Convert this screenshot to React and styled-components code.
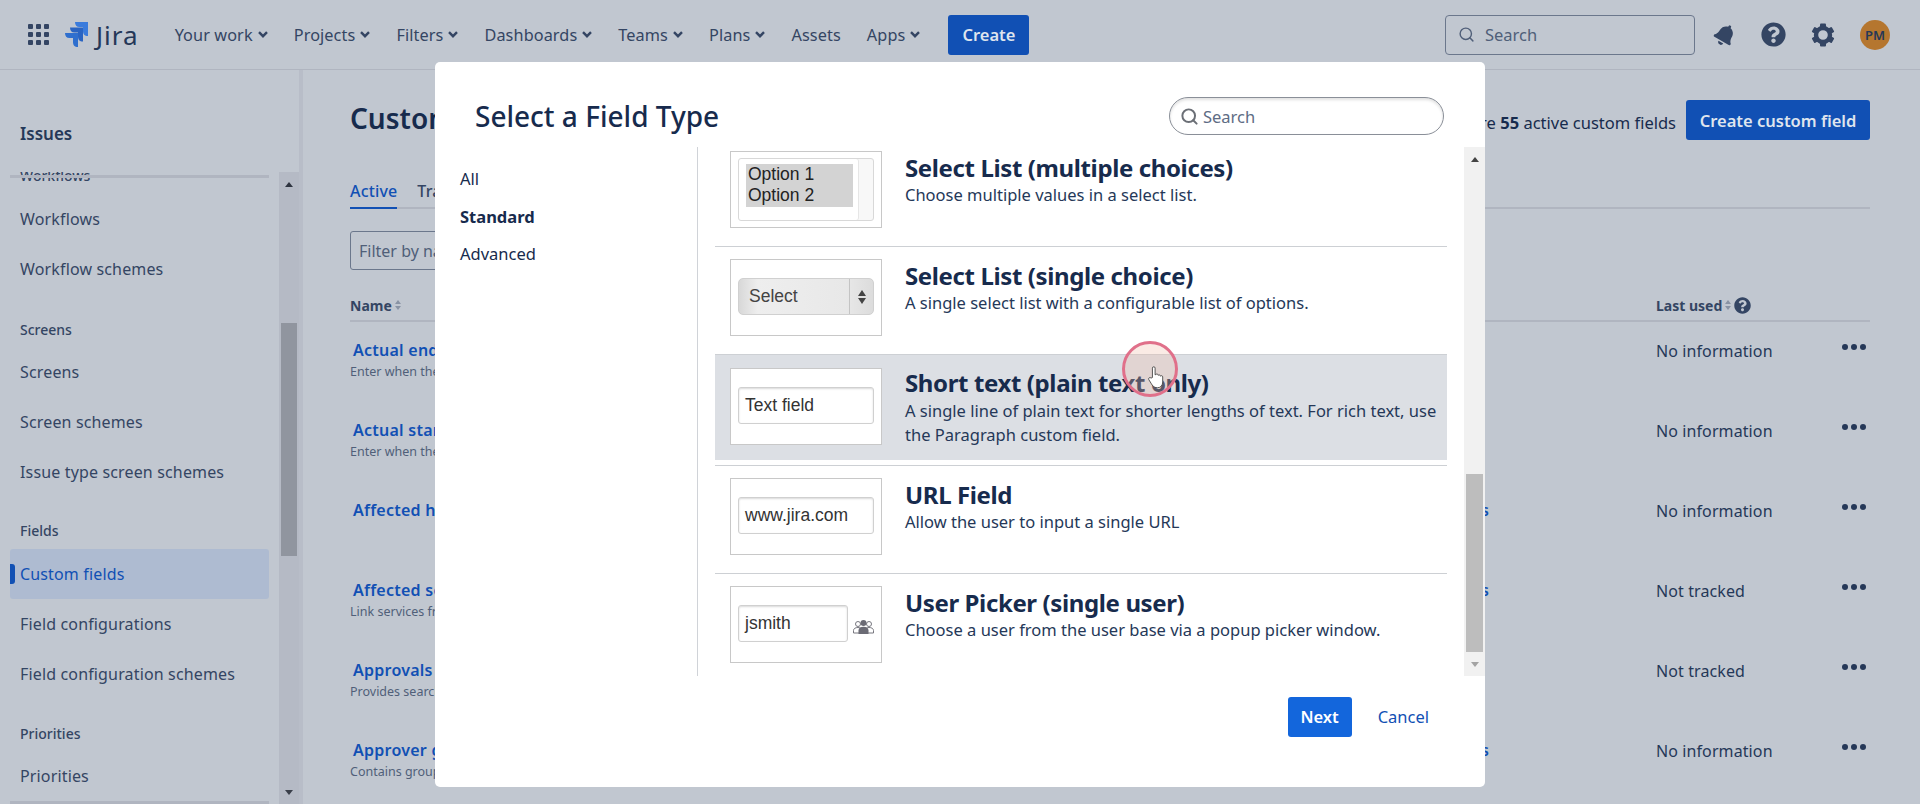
import React from 'react';
import styled, { createGlobalStyle } from 'styled-components';
import { FiSearch } from 'react-icons/fi';
import { FaBell, FaQuestionCircle } from 'react-icons/fa';

const GlobalStyle = createGlobalStyle`
  html, body {
    margin: 0;
    padding: 0;
    height: 804px;
    overflow: hidden;
    background: #c1c7d0;
    font-family: "Noto Sans", "Open Sans", sans-serif;
    color: #172b4d;
  }
  * { box-sizing: border-box; }
`;

const Page = styled.div`
  position: relative;
  width: 1920px;
  height: 804px;
  display: flex;
  flex-direction: column;
  overflow: hidden;
  background: #c1c7d0;
`;

const TopBar = styled.header`
  height: 70px;
  flex-shrink: 0;
  display: flex;
  align-items: center;
  padding: 0 30px 0 28px;
  border-bottom: 1px solid #b0b5c0;
`;

const AppGrid = styled.div`
  display: grid;
  grid-template-columns: repeat(3, 5px);
  grid-auto-rows: 5px;
  gap: 3px;
  margin-right: 16px;
`;

const AppDot = styled.span`
  background: #344563;
  border-radius: 1px;
`;

const LogoText = styled.span`
  font-size: 26px;
  font-weight: 400;
  color: #253858;
  margin-left: 8px;
  margin-right: 36px;
  letter-spacing: 1px;
`;

const NavItem = styled.a`
  display: flex;
  align-items: center;
  gap: 5px;
  margin-right: ${(p) => p.$gap || 26}px;
  font-size: 16.25px;
  letter-spacing: 0.1px;
  color: #344563;
  white-space: nowrap;
`;

const CreateButton = styled.button`
  width: 81px;
  height: 40px;
  border: none;
  border-radius: 3px;
  background: #1150b4;
  color: #dfe5ee;
  font: 600 16.5px "Noto Sans", sans-serif;
`;

const TopSearch = styled.div`
  width: 250px;
  height: 40px;
  margin-left: auto;
  display: flex;
  align-items: center;
  gap: 10px;
  padding: 0 12px;
  border: 1px solid #6b778c;
  border-radius: 4px;
  color: #505f79;
  font-size: 16.5px;
`;

const TopIcons = styled.div`
  display: flex;
  align-items: center;
  color: #344563;
  margin-left: 19px;
  gap: 25px;
`;

const Avatar = styled.div`
  width: 30px;
  height: 30px;
  border-radius: 50%;
  background: #b5762f;
  color: #253858;
  font-size: 13px;
  font-weight: 600;
  display: flex;
  align-items: center;
  justify-content: center;
`;

const Body = styled.div`
  flex: 1;
  min-height: 0;
  display: flex;
`;

const Sidebar = styled.aside`
  width: 303px;
  flex-shrink: 0;
  display: flex;
  flex-direction: column;
  border-right: 4px solid #b8bdc8;
`;

const SidebarTitle = styled.div`
  height: 102px;
  padding: 52px 0 0 20px;
  font-size: 17px;
  font-weight: 600;
  color: #253858;
`;

const SidebarBody = styled.div`
  flex: 1;
  min-height: 0;
  display: flex;
  position: relative;
  gap: 10px;
  padding-left: 10px;
`;

const RuleLine = styled.div`
  position: absolute;
  left: 10px;
  width: 259px;
  height: 3px;
  background: #b0b5c0;
  ${(p) => (p.$bottom ? 'bottom: 0;' : 'top: 3px;')}
`;

const SideList = styled.nav`
  width: 259px;
  overflow: hidden;
  display: flex;
  flex-direction: column;
`;

const SideHeading = styled.div`
  height: 20px;
  flex-shrink: 0;
  margin: ${(p) => p.$margin};
  padding-left: 10px;
  font-size: 14px;
  line-height: 20px;
  font-weight: 500;
  color: #344563;
`;

const SideItem = styled.a`
  position: relative;
  height: 50px;
  flex-shrink: 0;
  display: flex;
  align-items: center;
  padding-left: 10px;
  font-size: 16px;
  letter-spacing: 0.15px;
  border-radius: 3px;
  color: ${(p) => (p.$active ? '#1150b4' : '#344563')};
  background: ${(p) => (p.$active ? '#aebbd1' : 'transparent')};

  ${(p) =>
    p.$active &&
    `&::before {
      content: '';
      position: absolute;
      left: 0;
      top: 15px;
      width: 5px;
      height: 20px;
      border-radius: 0 3px 3px 0;
      background: #1150b4;
    }`}
`;

const Track = styled.div`
  width: 20px;
  display: flex;
  flex-direction: column;
  background: ${(p) => p.$bg};
`;

const Arrow = styled.div`
  height: 24px;
  flex-shrink: 0;
  display: flex;
  align-items: center;
  justify-content: center;

  &::after {
    content: '';
    border-left: 4.5px solid transparent;
    border-right: 4.5px solid transparent;
    ${(p) => (p.$down ? 'border-top' : 'border-bottom')}: 5px solid ${(p) => p.$color};
  }
`;

const Thumb = styled.div`
  height: ${(p) => p.$height}px;
  margin: ${(p) => p.$top}px 2px auto;
  background: ${(p) => p.$color};
`;

const Main = styled.main`
  flex: 1;
  min-width: 0;
  padding: 0 50px 0 47px;
`;

const MainHead = styled.div`
  height: 100px;
  padding-top: 30px;
  display: flex;
  align-items: flex-start;
`;

const PageTitle = styled.h1`
  margin: -2px 0 0;
  font-size: 28px;
  line-height: 40px;
  font-weight: 600;
  color: #172b4d;
`;

const HeadRight = styled.div`
  margin-left: auto;
  display: flex;
  align-items: center;
  gap: 10px;
  font-size: 16.5px;
  color: #172b4d;
`;

const CountText = styled.span`
  margin-top: 4px;
`;

const PrimaryButton = styled.button`
  height: 40px;
  width: 184px;
  border: none;
  border-radius: 3px;
  background: #1150b4;
  color: #dfe5ee;
  font: 600 16.5px "Noto Sans", sans-serif;
`;

const Tabs = styled.div`
  display: flex;
  gap: 20px;
  height: 39px;
  border-bottom: 2px solid #b0b5c0;
  font-size: 16px;
  font-weight: 500;
  letter-spacing: 0.15px;
  color: #344563;
`;

const Tab = styled.a`
  height: 39px;
  padding-top: 10px;
  color: ${(p) => (p.$active ? '#1150b4' : '#344563')};
  border-bottom: ${(p) => (p.$active ? '2px solid #1150b4' : 'none')};
`;

const FilterInput = styled.div`
  width: 200px;
  height: 39px;
  margin-top: 22px;
  padding: 0 8px;
  display: flex;
  align-items: center;
  border: 1px solid #6b778c;
  border-radius: 3px;
  font-size: 16px;
  color: #505f79;
`;

const TableHead = styled.div`
  height: 52px;
  padding-top: 25px;
  display: grid;
  grid-template-columns: 1306px 1fr;
  border-bottom: 2px solid #b0b5c0;
  font-size: 14px;
  font-weight: 700;
  color: #344563;
`;

const HeadCell = styled.div`
  display: flex;
  align-items: center;
  gap: 3px;
  height: 20px;
`;

const SortMark = styled.span`
  display: flex;
  flex-direction: column;
  gap: 2px;

  &::before, &::after {
    content: '';
    border-left: 3px solid transparent;
    border-right: 3px solid transparent;
  }
  &::before { border-bottom: 4px solid #8993a4; }
  &::after { border-top: 4px solid #8993a4; }
`;

const TableRow = styled.div`
  height: 80px;
  padding-top: 17px;
  display: grid;
  grid-template-columns: 1139px 167px 1fr 24px;
`;

const NameCell = styled.div`
  display: flex;
  flex-direction: column;
  gap: 2px;
`;

const FieldLink = styled.a`
  padding-left: 3px;
  font-size: 16px;
  letter-spacing: 0.25px;
  line-height: 22px;
  font-weight: 600;
  color: #1150b4;
`;

const FieldDesc = styled.div`
  font-size: 12.5px;
  line-height: 18px;
  color: #505f79;
`;

const ScreensCell = styled.div`
  justify-self: end;
  margin-right: 167px;
  font-size: 16px;
  line-height: 22px;
  font-weight: 600;
  color: #1150b4;
  white-space: nowrap;
`;

const UsedCell = styled.div`
  font-size: 16px;
  letter-spacing: 0.1px;
  line-height: 24px;
  color: #253858;
`;

const Dots = styled.div`
  display: flex;
  gap: 3px;
  height: 6px;
  margin: 5px 0 0 -4px;

  span {
    width: 6px;
    height: 6px;
    border-radius: 50%;
    background: #253858;
  }
`;

const Modal = styled.section`
  position: absolute;
  left: 435px;
  top: 62px;
  width: 1050px;
  height: 725px;
  background: #fff;
  border-radius: 5px;
  display: flex;
  flex-direction: column;
`;

const ModalHead = styled.div`
  height: 85px;
  flex-shrink: 0;
  padding: 35px 41px 0 40px;
  display: flex;
  justify-content: space-between;
  align-items: flex-start;
`;

const ModalTitle = styled.h2`
  margin: 0;
  font-size: 28px;
  line-height: 38px;
  font-weight: 500;
  color: #172b4d;
`;

const ModalSearch = styled.div`
  width: 275px;
  height: 38px;
  display: flex;
  align-items: center;
  gap: 4px;
  padding: 0 10px;
  border: 1px solid #8a8f98;
  border-radius: 19px;
  box-shadow: inset 0 2px 3px rgba(0, 0, 0, 0.12);
  font-size: 16.5px;
  color: #5e6c84;
`;

const ModalBody = styled.div`
  height: 529px;
  flex-shrink: 0;
  display: flex;
`;

const TypeNav = styled.nav`
  width: 263px;
  flex-shrink: 0;
  padding: 17px 0 0 25px;
  border-right: 1px solid #d0d3d8;
  display: flex;
  flex-direction: column;
  gap: 7.5px;
`;

const TypeLink = styled.a`
  font-size: 16.5px;
  line-height: 30px;
  font-weight: ${(p) => (p.$active ? 700 : 400)};
  color: #172b4d;
`;

const TypeList = styled.div`
  width: 732px;
  margin-left: 17px;
  flex-shrink: 0;
  padding-top: 4px;
`;

const TypeRow = styled.div`
  display: flex;
  gap: 23px;
  height: ${(p) => p.$height || 107}px;
  padding: ${(p) => p.$top}px 15px 0;
  margin-bottom: ${(p) => p.$after || 0}px;
  border-top: ${(p) => (p.$first ? 'none' : '1px solid #cdd0d4')};
  background: ${(p) => (p.$hover ? '#dcdfe4' : 'transparent')};
`;

const Preview = styled.div`
  width: 152px;
  height: 77px;
  flex-shrink: 0;
  padding: 6px 7px;
  display: flex;
  align-items: ${(p) => (p.$tall ? 'flex-start' : 'center')};
  gap: 5px;
  background: #fff;
  border: 1px solid #c8c8c8;
  font-family: "Liberation Sans", Arial, sans-serif;
  font-size: 17.5px;
  color: #333;
`;

const SampleInput = styled.div`
  flex: 1;
  height: 37px;
  margin-top: -2px;
  padding-left: 6px;
  display: flex;
  align-items: center;
  background: #fff;
  border: 1px solid #d0d0d0;
  border-radius: 3px;
  box-shadow: inset 0 1px 2px rgba(0, 0, 0, 0.15);
`;

const SampleMulti = styled.div`
  flex: 1;
  height: 63px;
  padding: 5px 20px 0 7px;
  border: 1px solid #d8d8d8;
  border-radius: 3px;
  box-shadow: inset -14px 0 0 #f8f8f8, inset -15px 0 0 #e6e6e6;
`;

const OptionBlock = styled.div`
  background: #d3d3d3;
  padding: 0 0 1px 2px;
  line-height: 21px;
  color: #222;
`;

const SampleSelect = styled.div`
  flex: 1;
  height: 37px;
  margin-top: -2px;
  display: flex;
  align-items: center;
  justify-content: space-between;
  padding-left: 10px;
  border: 1px solid #d0d0d0;
  border-radius: 5px;
  background: linear-gradient(90deg, #d8d8d8, #eeeeee 14%, #e8e8e8 80%, #dcdcdc);
  color: #444;
`;

const SelectArrows = styled.div`
  width: 24px;
  height: 100%;
  display: flex;
  flex-direction: column;
  align-items: center;
  justify-content: center;
  gap: 2px;
  border-left: 1px solid #c4c4c4;

  &::before, &::after {
    content: '';
    border-left: 4px solid transparent;
    border-right: 4px solid transparent;
  }
  &::before { border-bottom: 6px solid #444; }
  &::after { border-top: 6px solid #444; }
`;

const PickerIcon = styled.span`
  display: flex;
  margin-top: 5px;
`;

const TypeText = styled.div`
  flex: 1;
  min-width: 0;
  margin-top: ${(p) => p.$offset ?? 2.5}px;
`;

const TypeTitle = styled.div`
  font-size: 24px;
  line-height: 28px;
  font-weight: 700;
  color: #172b4d;
  letter-spacing: -0.38px;
`;

const TypeDesc = styled.div`
  margin-top: 1.5px;
  margin-right: -6px;
  font-size: 16.5px;
  line-height: 24.5px;
  color: #253858;
`;

const ModalScroll = styled.div`
  width: 21px;
  margin-left: auto;
  display: flex;
  flex-direction: column;
  background: #f1f1f1;
`;

const ModalFoot = styled.div`
  flex: 1;
  display: flex;
  justify-content: flex-end;
  align-items: center;
  gap: 26px;
  padding: 0 56px 30px 0;
`;

const NextButton = styled.button`
  width: 64px;
  height: 40px;
  border: none;
  border-radius: 3px;
  background: #1366dc;
  color: #fff;
  font: 600 16.5px "Noto Sans", sans-serif;
`;

const CancelLink = styled.a`
  font-size: 16.5px;
  color: #1150b4;
`;

const Cursor = styled.div`
  position: absolute;
  left: 1122px;
  top: 341px;
  width: 56px;
  height: 56px;
  padding: 21px 0 0 11px;
  border: 3px solid #e0708a;
  border-radius: 50%;
  background: rgba(240, 190, 170, 0.3);
  display: flex;
  align-items: flex-start;
  justify-content: center;
`;

const JiraLogo = () => (
  <svg width="23" height="25" viewBox="0 0 23 25">
    <path d="M10 0H23V14C19.500 14 18 12 18 9V5H14.500C11.500 5 10 3 10 0Z" fill="#3a7bdc" />
    <path d="M5 5.500H18V19.500C14.500 19.500 13 17.500 13 14.500V10.500H9.500C6.500 10.500 5 8.500 5 5.500Z" fill="#2a64c2" />
    <path d="M0 11H13V25C9.500 25 8 23 8 20V16H4.500C1.500 16 0 14 0 11Z" fill="#2f6fce" />
  </svg>
);

const GearIcon = () => (
  <svg width="24" height="24" viewBox="0 0 24 24" fill="#344563">
    <circle cx="12" cy="12" r="7" fill="none" stroke="#344563" strokeWidth="4.400" />
    {[0, 60, 120, 180, 240, 300].map((deg) => (
      <rect key={deg} x="9" y="0.500" width="6" height="5" rx="1" transform={`rotate(${deg} 12 12)`} />
    ))}
  </svg>
);

const NavCaret = () => (
  <svg width="10" height="7" viewBox="0 0 10 7" fill="none" stroke="#344563" strokeWidth="2.400">
    <path d="M1 1.200L5 5.200L9 1.200" />
  </svg>
);

const PickerPeople = () => (
  <svg width="21" height="15" viewBox="0 0 21 15">
    <g fill="#fff" stroke="#77777f" strokeWidth="1">
      <circle cx="5" cy="4" r="2.500" />
      <path d="M0.500 13V10.500C0.500 8.500 2.500 7.500 5 7.500S9 8.500 9 10.500V13Z" />
      <circle cx="16" cy="4" r="2.500" />
      <path d="M12 13V10.500C12 8.500 13.500 7.500 16 7.500S20.500 8.500 20.500 10.500V13Z" />
    </g>
    <g fill="#6b6b75">
      <circle cx="10.500" cy="3" r="3" />
      <path d="M5.500 14V10.500C5.500 8 7.500 6.800 10.500 6.800S15.500 8 15.500 10.500V14Z" />
    </g>
  </svg>
);

const HandCursor = () => (
  <svg width="20" height="25" viewBox="0 0 22 28">
    <path
      d="M7 14V3.500a1.500 1.500 0 0 1 3 0V11l1-.4a1.400 1.400 0 0 1 2.400.6l.1.4a1.400 1.400 0 0 1 2.400.5l.1.4a1.400 1.400 0 0 1 2.500.9V19c0 3.500-2 6.500-6 6.500S7 23 5.500 20.500L3 16.500a1.500 1.500 0 0 1 2.400-1.800z"
      fill="#fff"
      stroke="#444"
      strokeWidth="1"
    />
  </svg>
);

const navItems = [
  { label: 'Your work', caret: true },
  { label: 'Projects', caret: true },
  { label: 'Filters', caret: true },
  { label: 'Dashboards', caret: true },
  { label: 'Teams', caret: true },
  { label: 'Plans', caret: true },
  { label: 'Assets' },
  { label: 'Apps', caret: true, gap: 28 },
];

const rows = [
  { name: 'Actual end', desc: 'Enter when the work actually ended', used: 'No information' },
  { name: 'Actual start', desc: 'Enter when the work actually started', used: 'No information' },
  { name: 'Affected hardware', desc: '', used: 'No information', screens: '2 screens' },
  { name: 'Affected services', desc: 'Link services from your catalog', used: 'Not tracked', screens: '4 screens' },
  { name: 'Approvals', desc: 'Provides search options for approvals', used: 'Not tracked' },
  { name: 'Approver groups', desc: 'Contains groups of approvers', used: 'No information', screens: '3 screens' },
];

const App = () => (
  <Page>
    <GlobalStyle />
    <TopBar>
      <AppGrid>
        {Array.from({ length: 9 }).map((_, i) => (
          <AppDot key={i} />
        ))}
      </AppGrid>
      <JiraLogo />
      <LogoText>Jira</LogoText>
      {navItems.map((item) => (
        <NavItem key={item.label} $gap={item.gap}>
          {item.label}
          {item.caret && <NavCaret />}
        </NavItem>
      ))}
      <CreateButton>Create</CreateButton>
      <TopSearch>
        <FiSearch size={17} />
        Search
      </TopSearch>
      <TopIcons>
        <FaBell size={22} style={{ transform: 'rotate(30deg)' }} />
        <FaQuestionCircle size={25} />
        <GearIcon />
        <Avatar>PM</Avatar>
      </TopIcons>
    </TopBar>

    <Body>
      <Sidebar>
        <SidebarTitle>Issues</SidebarTitle>
        <SidebarBody>
          <RuleLine />
          <RuleLine $bottom />
          <SideList>
            <SideHeading $margin="-6px 0 8px">Workflows</SideHeading>
            <SideItem>Workflows</SideItem>
            <SideItem>Workflow schemes</SideItem>
            <SideHeading $margin="26px 0 7px">Screens</SideHeading>
            <SideItem>Screens</SideItem>
            <SideItem>Screen schemes</SideItem>
            <SideItem>Issue type screen schemes</SideItem>
            <SideHeading $margin="24px 0 8px">Fields</SideHeading>
            <SideItem $active>Custom fields</SideItem>
            <SideItem>Field configurations</SideItem>
            <SideItem>Field configuration schemes</SideItem>
            <SideHeading $margin="25px 0 7px">Priorities</SideHeading>
            <SideItem>Priorities</SideItem>
          </SideList>
          <Track $bg="#b5bac5">
            <Arrow $color="#2e3440" />
            <Thumb $top={127} $height={233} $color="#90959f" />
            <Arrow $down $color="#3a3f4a" />
          </Track>
        </SidebarBody>
      </Sidebar>

      <Main>
        <MainHead>
          <PageTitle>Custom fields</PageTitle>
          <HeadRight>
            <CountText>
              There are <b>55</b> active custom fields
            </CountText>
            <PrimaryButton>Create custom field</PrimaryButton>
          </HeadRight>
        </MainHead>
        <Tabs>
          <Tab $active>Active</Tab>
          <Tab>Trash</Tab>
        </Tabs>
        <FilterInput>Filter by name</FilterInput>
        <TableHead>
          <HeadCell>
            Name <SortMark />
          </HeadCell>
          <HeadCell>
            Last used <SortMark />
            <FaQuestionCircle size={17} />
          </HeadCell>
        </TableHead>
        {rows.map((row) => (
          <TableRow key={row.name}>
            <NameCell>
              <FieldLink>{row.name}</FieldLink>
              <FieldDesc>{row.desc}</FieldDesc>
            </NameCell>
            <ScreensCell>{row.screens}</ScreensCell>
            <UsedCell>{row.used}</UsedCell>
            <Dots>
              <span />
              <span />
              <span />
            </Dots>
          </TableRow>
        ))}
      </Main>
    </Body>

    <Modal>
      <ModalHead>
        <ModalTitle>Select a Field Type</ModalTitle>
        <ModalSearch>
          <FiSearch size={19} strokeWidth={2.5} color="#6b6f76" />
          Search
        </ModalSearch>
      </ModalHead>
      <ModalBody>
        <TypeNav>
          <TypeLink>All</TypeLink>
          <TypeLink $active>Standard</TypeLink>
          <TypeLink>Advanced</TypeLink>
        </TypeNav>
        <TypeList>
          <TypeRow $first $top={0} $height={95}>
            <Preview $tall>
              <SampleMulti>
                <OptionBlock>
                  Option 1
                  <br />
                  Option 2
                </OptionBlock>
              </SampleMulti>
            </Preview>
            <TypeText>
              <TypeTitle>Select List (multiple choices)</TypeTitle>
              <TypeDesc>Choose multiple values in a select list.</TypeDesc>
            </TypeText>
          </TypeRow>
          <TypeRow $top={12} $height={108}>
            <Preview>
              <SampleSelect>
                Select
                <SelectArrows />
              </SampleSelect>
            </Preview>
            <TypeText>
              <TypeTitle>Select List (single choice)</TypeTitle>
              <TypeDesc>A single select list with a configurable list of options.</TypeDesc>
            </TypeText>
          </TypeRow>
          <TypeRow $hover $top={13} $height={106} $after={5}>
            <Preview>
              <SampleInput>Text field</SampleInput>
            </Preview>
            <TypeText $offset={1}>
              <TypeTitle>Short text (plain text only)</TypeTitle>
              <TypeDesc>
                A single line of plain text for shorter lengths of text. For rich text, use the Paragraph custom field.
              </TypeDesc>
            </TypeText>
          </TypeRow>
          <TypeRow $top={12} $height={108}>
            <Preview>
              <SampleInput>www.jira.com</SampleInput>
            </Preview>
            <TypeText>
              <TypeTitle>URL Field</TypeTitle>
              <TypeDesc>Allow the user to input a single URL</TypeDesc>
            </TypeText>
          </TypeRow>
          <TypeRow $top={12}>
            <Preview>
              <SampleInput>jsmith</SampleInput>
              <PickerIcon>
                <PickerPeople />
              </PickerIcon>
            </Preview>
            <TypeText>
              <TypeTitle>User Picker (single user)</TypeTitle>
              <TypeDesc>Choose a user from the user base via a popup picker window.</TypeDesc>
            </TypeText>
          </TypeRow>
        </TypeList>
        <ModalScroll>
          <Arrow $color="#444" />
          <Thumb $top={303} $height={181} $color="#bdbdbd" />
          <Arrow $down $color="#a3a3a3" />
        </ModalScroll>
      </ModalBody>
      <ModalFoot>
        <NextButton>Next</NextButton>
        <CancelLink>Cancel</CancelLink>
      </ModalFoot>
    </Modal>

    <Cursor>
      <HandCursor />
    </Cursor>
  </Page>
);

export default App;
